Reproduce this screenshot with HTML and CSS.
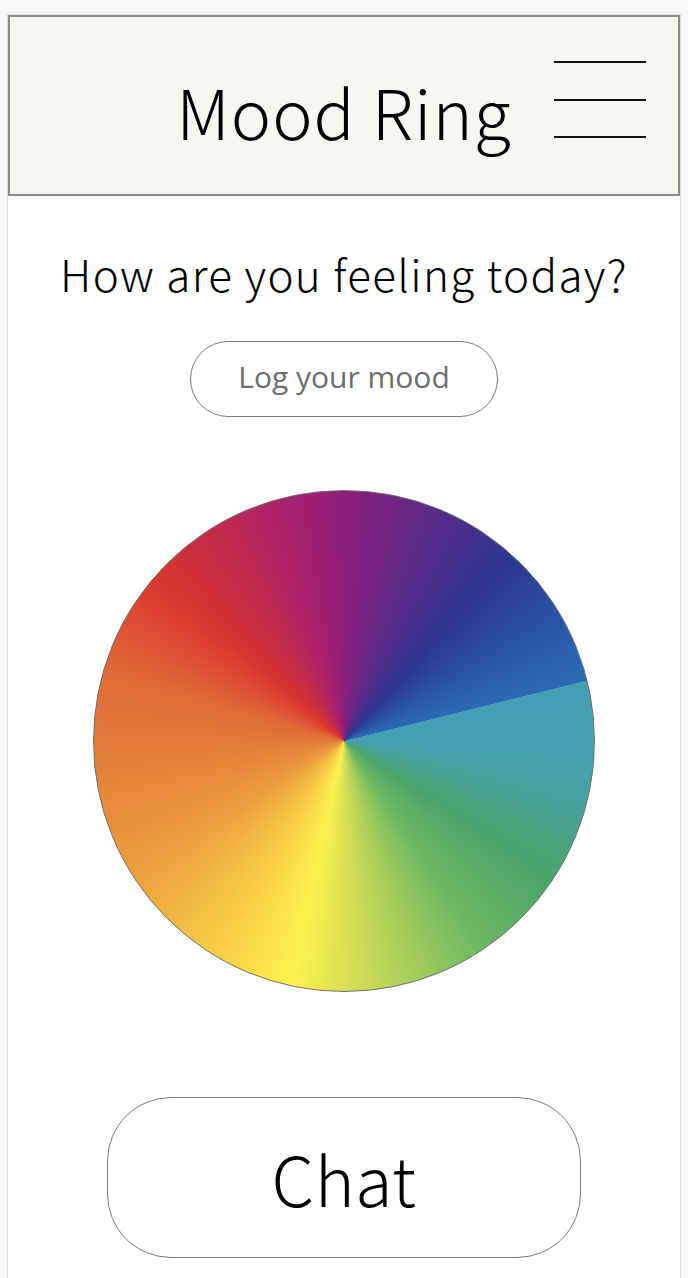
FILE: index.html
```html
<!DOCTYPE html>
<html>
<head>
<meta charset="utf-8">
<link rel="stylesheet" href="styles.css">
</head>
<body>
<div class="frame">
  <header class="header">
    <div class="spacer"></div>
    <h1 class="title">Mood Ring</h1>
    <div class="menu" aria-label="menu">
      <span class="bar"></span>
      <span class="bar"></span>
      <span class="bar"></span>
    </div>
  </header>
  <main class="content">
    <p class="question">How are you feeling today?</p>
    <button class="log-btn">Log your mood</button>
    <div class="wheel"></div>
    <button class="chat-btn">Chat</button>
  </main>
</div>
</body>
</html>
```
FILE: styles.css
```css
html, body {
  margin: 0;
  padding: 0;
}
body {
  background: #f8f8f8;
  font-family: "Noto Sans CJK JP", "Noto Sans", sans-serif;
  color: #000;
}
.frame {
  margin: 14px 7px 0 7px;
  border: 1px solid #dcdcdc;
  border-bottom: none;
  background: #ffffff;
  min-height: 1264px;
  box-sizing: border-box;
}
.header {
  display: grid;
  grid-template-columns: 1fr auto 1fr;
  align-items: center;
  height: 181px;
  box-sizing: border-box;
  border: 2px solid #8a8a8a;
  background: #f6f6f2;
}
.title {
  margin: 0;
  font-weight: 300;
  font-size: 68px;
  line-height: 1;
  padding-top: 10px;
  letter-spacing: 1px;
}
.menu {
  justify-self: end;
  margin-right: 32px;
  display: flex;
  flex-direction: column;
  gap: 35.5px;
  margin-top: -12px;
}
.bar {
  display: block;
  width: 92px;
  height: 2px;
  background: #111;
}
.content {
  display: flex;
  flex-direction: column;
  align-items: center;
}
.question {
  margin: 48px 0 0 0;
  font-size: 44px;
  font-weight: 300;
  line-height: 58px;
  letter-spacing: 1.35px;
}
.log-btn {
  margin-top: 39px;
  width: 308px;
  height: 76px;
  border: 1.5px solid #7a7a7a;
  border-radius: 38px;
  background: #fff;
  font-family: "Open Sans", "Noto Sans", sans-serif;
  font-size: 30px;
  color: #6d6d6d;
  padding: 0 0 6px 0;
}
.wheel {
  margin-top: 73px;
  width: 502px;
  height: 502px;
  border-radius: 50%;
  box-sizing: border-box;
  border: 1px solid #707070;
  background: conic-gradient(from 76deg,
    #46a0b5 0deg,
    #47a0ad 22deg,
    #4aa56a 48deg,
    #6cb862 70deg,
    #cfdc55 100deg,
    #fcf14c 116deg,
    #f6c545 140deg,
    #eda13e 160deg,
    #e5893a 180deg,
    #e06a36 210deg,
    #d9352e 235deg,
    #c12c4a 252deg,
    #ae206b 268deg,
    #8a1f7a 285deg,
    #5a2a8a 305deg,
    #2d3590 326deg,
    #2a55a6 345deg,
    #2b6bb4 360deg);
}
.chat-btn {
  margin-top: 105px;
  width: 474px;
  height: 161px;
  border: 1.5px solid #7a7a7a;
  border-radius: 64px;
  background: #fff;
  font-family: "Noto Sans CJK JP", "Noto Sans", sans-serif;
  font-size: 68px;
  font-weight: 300;
  letter-spacing: 0.5px;
  color: #000;
  padding: 0;
}
```
